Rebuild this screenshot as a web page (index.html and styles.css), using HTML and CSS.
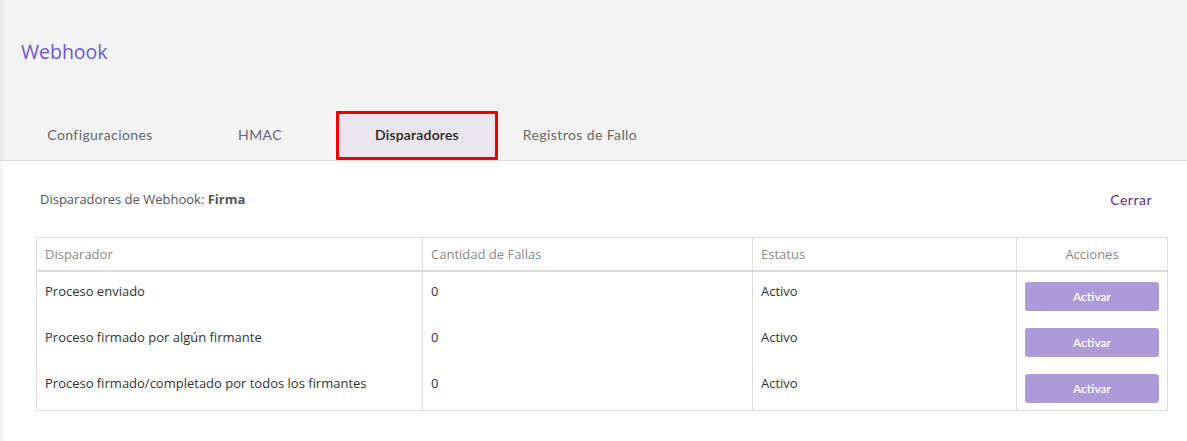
FILE: index.html
```html
<!DOCTYPE html>
<html lang="es">
<head>
<meta charset="utf-8">
<title>Webhook</title>
<link rel="stylesheet" href="styles.css">
</head>
<body>
<div class="page">
  <header class="header">
    <h1 class="title">Webhook</h1>
    <nav class="tabs">
      <a class="tab">Configuraciones</a>
      <a class="tab">HMAC</a>
      <a class="tab active">Disparadores</a>
      <a class="tab">Registros de Fallo</a>
    </nav>
  </header>
  <main class="content">
    <div class="toolbar">
      <div class="subtitle">Disparadores de Webhook: <strong>Firma</strong></div>
      <a class="close">Cerrar</a>
    </div>
    <table class="grid">
      <colgroup>
        <col class="c1"><col class="c2"><col class="c3"><col class="c4">
      </colgroup>
      <thead>
        <tr>
          <th>Disparador</th>
          <th>Cantidad de Fallas</th>
          <th>Estatus</th>
          <th class="center">Acciones</th>
        </tr>
      </thead>
      <tbody>
        <tr>
          <td>Proceso enviado</td>
          <td>0</td>
          <td>Activo</td>
          <td><button class="btn">Activar</button></td>
        </tr>
        <tr>
          <td>Proceso firmado por algún firmante</td>
          <td>0</td>
          <td>Activo</td>
          <td><button class="btn">Activar</button></td>
        </tr>
        <tr>
          <td>Proceso firmado/completado por todos los firmantes</td>
          <td>0</td>
          <td>Activo</td>
          <td><button class="btn">Activar</button></td>
        </tr>
      </tbody>
    </table>
  </main>
</div>
</body>
</html>
```
FILE: styles.css
```css
* { box-sizing: border-box; }
html, body { margin: 0; padding: 0; }
body {
  font-family: "Open Sans", "Noto Sans", sans-serif;
  background: #fff;
  color: #333;
  width: 1187px;
  height: 441px;
  overflow: hidden;
}
.page { display: flex; flex-direction: column; height: 441px; }

.header {
  background: linear-gradient(to right, #e6e6e6 0, #f4f4f4 5px);
  border-bottom: 1px solid #d9d9d9;
  height: 161px;
  display: flex;
  flex-direction: column;
}
.title {
  margin: 0;
  padding: 39px 0 0 21px;
  height: 111px;
  font-size: 19.5px;
  font-weight: 400;
  color: #6b57d6;
  line-height: 26px;
}
.tabs {
  display: flex;
  padding-left: 20px;
  height: 49px;
}
.tab {
  width: 160px;
  display: flex;
  align-items: center;
  justify-content: center;
  font-family: "Lato", "Inter", sans-serif;
  font-size: 14px;
  letter-spacing: 0.4px;
  color: #666;
  padding-bottom: 2px;
}
.tab.active {
  background: #e9e6ef;
  color: #222;
  font-weight: 600;
  letter-spacing: 0.2px;
  border: 3px solid #f00000;
  border-radius: 1px;
  margin-left: -4px;
  width: 162px;
  margin-right: 2px;
}

.content {
  flex: 1;
  background: linear-gradient(to right, #f0f0f0 0, #fff 5px);
  padding: 0 20px 0 36px;
}
.toolbar {
  display: flex;
  justify-content: space-between;
  align-items: center;
  height: 76px;
  padding: 0 15px 0 4px;
}
.subtitle { font-size: 13px; color: #555; }
.subtitle strong { font-weight: 700; color: #555; }
.close {
  font-family: "Lato", "Inter", sans-serif;
  font-size: 14px;
  letter-spacing: 0.5px;
  color: #5a2d95;
}

.grid {
  width: 1131px;
  table-layout: fixed;
  border-collapse: collapse;
  border: 1px solid #dcdcdc;
  font-size: 13px;
}
.c1 { width: 386px; }
.c2 { width: 330px; }
.c3 { width: 264px; }
.c4 { width: 151px; }
.grid th {
  font-weight: 400;
  color: #888;
  text-align: left;
  height: 33px;
  padding: 0 8px;
  border-right: 1px solid #dcdcdc;
  border-bottom: 2px solid #dcdcdc;
}
.grid th.center { text-align: center; }
.grid td {
  vertical-align: top;
  padding: 10px 8px 7px;
  height: 46px;
  border-right: 1px solid #dcdcdc;
  color: #333;
  line-height: 18px;
}
.btn {
  display: block;
  width: 134px;
  height: 29px;
  border: none;
  border-radius: 3px;
  background: #ad9bd9;
  color: #fff;
  font-family: "Lato", "Inter", sans-serif;
  font-size: 12px;
  font-weight: 600;
}
```
